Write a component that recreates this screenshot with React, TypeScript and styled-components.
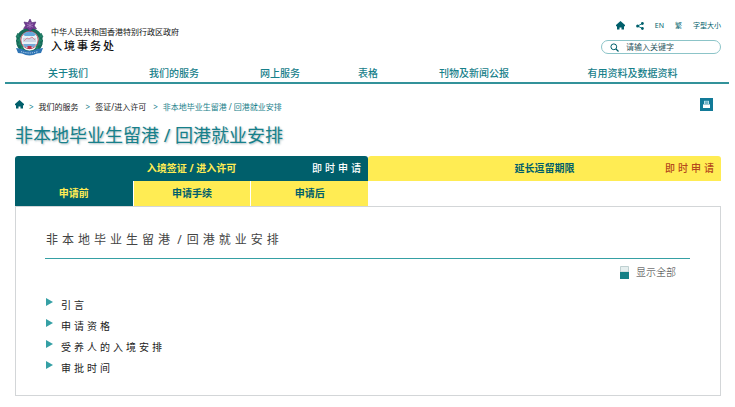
import React from "react";
import styled, { createGlobalStyle } from "styled-components";

const teal = "#17808a";
const deepTeal = "#005f6b";
const yellow = "#ffec53";

const GlobalStyle = createGlobalStyle`
  *, *::before, *::after { box-sizing: border-box; }
  body {
    margin: 0;
    background: #fff;
    color: #222;
    font-family: "Noto Sans", "Noto Sans CJK SC", sans-serif;
    font-size: 10px;
    line-height: 16px;
  }
  a { color: inherit; text-decoration: none; }
  button { font: inherit; color: inherit; border: 0; background: none; padding: 0; cursor: pointer; }
  h1, h2, ul, ol { margin: 0; padding: 0; font-weight: 400; list-style: none; }
  svg { display: block; flex: none; }
`;

const Header = styled.header`
  display: flex;
  justify-content: space-between;
  padding: 18px 14px 0 15px;
  height: 64px;
`;

const Brand = styled.a`
  display: flex;
  align-items: flex-start;
  gap: 7px;
`;

const BrandText = styled.span`
  display: flex;
  flex-direction: column;
  padding-top: 7px;
  color: #111;
`;

const Government = styled.span`
  font-size: 8px;
  line-height: 13px;
`;

const Department = styled.span`
  font-size: 11px;
  font-weight: 500;
  line-height: 15px;
  letter-spacing: 2px;
`;

const Tools = styled.div`
  display: flex;
  flex-direction: column;
  align-items: flex-end;
  gap: 7px;
`;

const ToolLinks = styled.div`
  display: flex;
  align-items: center;
  gap: 11px;
  height: 15px;
  color: ${deepTeal};
  font-size: 7px;
`;

const Search = styled.label`
  display: flex;
  align-items: center;
  gap: 7px;
  width: 120px;
  height: 14px;
  padding: 0 8px;
  border: 1px solid #8cc4c8;
  border-radius: 7px;
`;

const SearchInput = styled.input`
  flex: 1;
  min-width: 0;
  height: 12px;
  padding: 0;
  border: 0;
  outline: 0;
  background: none;
  font: inherit;
  font-size: 8px;
  line-height: 12px;
  &::placeholder { color: #2d5560; opacity: 1; }
`;

const Nav = styled.nav`
  display: flex;
  margin: 0 6px 0 5px;
  padding: 0 9px 0 10px;
  border-bottom: 2px solid #32929a;
  color: ${teal};
  font-weight: 500;
`;

const NavLink = styled.a<{ $share: number }>`
  flex: ${(p) => p.$share} 1 0;
  padding: 1px 0;
  text-align: center;
  white-space: nowrap;
`;

const Main = styled.main`
  padding: 14px 14px 11px 15px;
`;

const CrumbBar = styled.div`
  display: flex;
  align-items: flex-start;
  justify-content: space-between;
  padding-right: 8px;
`;

const Crumbs = styled.ol`
  display: flex;
  gap: 7px;
  font-size: 8px;
  line-height: 18px;
`;

const Crumb = styled.li<{ $current?: boolean }>`
  display: flex;
  gap: 5px;
  color: ${(p) => (p.$current ? teal : "#222")};
  &:first-child { padding-top: 2px; margin-right: -2px; }
  &:not(:first-child)::before { content: ">"; color: ${teal}; }
`;

const PrintButton = styled.button`
  display: grid;
  place-items: center;
  width: 13px;
  height: 13px;
  background: #127a98;
`;

const Title = styled.h1`
  margin: 6px 0 8px;
  color: ${teal};
  font-size: 18px;
  line-height: 26px;
  text-shadow: 1px 1px 2px #a8bcc0;
`;

const Tabs = styled.div`
  display: grid;
  grid-template-columns: 1fr 1fr;
  font-weight: 700;
  line-height: 25px;
`;

const Tab = styled.div<{ $active?: boolean }>`
  display: grid;
  grid-template-columns: 1fr auto 1fr;
  height: 25px;
  border-radius: 3px 3px 0 0;
  background: ${(p) => (p.$active ? deepTeal : yellow)};
  color: ${(p) => (p.$active ? yellow : deepTeal)};
`;

const TabLabel = styled.button`
  grid-column: 2;
`;

const Apply = styled.a<{ $active?: boolean }>`
  justify-self: end;
  padding-right: 4px;
  color: ${(p) => (p.$active ? "#fff" : "#b5481c")};
  font-weight: 500;
  letter-spacing: 3px;
`;

const SubTabs = styled.div`
  display: grid;
  grid-template-columns: repeat(3, 1fr);
`;

const SubTab = styled.button<{ $active?: boolean }>`
  height: 25px;
  background: ${(p) => (p.$active ? deepTeal : yellow)};
  color: ${(p) => (p.$active ? yellow : deepTeal)};
  font-weight: 700;
  & + & { border-left: 1px solid #fff; }
`;

const Panel = styled.section`
  padding: 21px 30px 16px 29px;
  border: 1px solid #d3d6d8;
`;

const PanelTitle = styled.h2`
  padding: 0 1px 7px;
  border-bottom: 1px solid #35a0a4;
  color: #444;
  font-size: 12px;
  line-height: 23px;
  letter-spacing: 4px;
`;

const Divider = styled.span`
  padding-right: 2px;
  letter-spacing: normal;
`;

const ShowAll = styled.button`
  display: flex;
  align-items: center;
  gap: 7px;
  margin: 5px 14px 15px auto;
  color: #333;
  font-weight: 300;
`;

const Topics = styled.ul`
  display: flex;
  flex-direction: column;
`;

const Topic = styled.button`
  display: flex;
  gap: 8px;
  height: 21px;
  padding-left: 1px;
  letter-spacing: 3px;
  line-height: 21px;
  svg { margin-top: 3px; }
`;

const HomeIcon = () => (
  <svg width="9" height="9" viewBox="0 0 9 9" fill={deepTeal} aria-hidden="true">
    <path d="M4.5 0 0 4v1.3h1v3.2h2.500V6.500h2v2H8V5.300h1V4z" />
  </svg>
);

const ShareIcon = () => (
  <svg width="8" height="8" viewBox="0 0 8 8" aria-hidden="true">
    <path d="M6.3 1.5 1.7 4l4.6 2.5" fill="none" stroke={teal} />
    <g fill={deepTeal}>
      <circle cx="6.4" cy="1.5" r="1.4" />
      <circle cx="1.6" cy="4" r="1.5" />
      <circle cx="6.4" cy="6.5" r="1.4" />
    </g>
  </svg>
);

const SearchIcon = () => (
  <svg width="9" height="9" viewBox="0 0 9 9" fill="none" stroke={deepTeal} aria-hidden="true">
    <circle cx="3.8" cy="3.8" r="2.9" />
    <path d="m6 6 2.5 2.5" strokeWidth="1.2" />
  </svg>
);

const PrintIcon = () => (
  <svg width="9" height="9" viewBox="0 0 9 9" aria-hidden="true">
    <path d="M2 .8h5V4H2z" fill="#b9e0ec" />
    <path d="M3 2h3M3 3.2h3" stroke="#127a98" strokeWidth=".6" />
    <path d="M1 4.4h7V8H1z" fill="#fff" />
  </svg>
);

const ExpandIcon = () => (
  <svg width="9" height="13" viewBox="0 0 9 13" aria-hidden="true">
    <path d="M.5.5h8V6h-8z" fill="#e5efef" stroke="#bfd0d1" />
    <path d="M0 6h9v7H0z" fill="#148086" />
  </svg>
);

const ArrowIcon = () => (
  <svg width="7" height="8" viewBox="0 0 7 8" aria-hidden="true">
    <path d="M0 0v8l7-4z" fill="#35a0a5" />
  </svg>
);

const Emblem = () => (
  <svg width="29" height="40" viewBox="0 0 29 40" aria-hidden="true">
    <circle cx="14.5" cy="23" r="11.5" fill="#f2f7f6" stroke="#176b59" strokeWidth="3.6" />
    <path
      d="M3 15 1 19l3 1-3 3 3 1-2 3 4 1-1 4 4-1M26 15l2 4-3 1 3 3-3 1 2 3-4 1 1 4-4-1"
      fill="#208368"
      stroke="#176b59"
      strokeWidth=".8"
    />
    <circle cx="14.5" cy="22" r="8.7" fill="#e8f1f6" stroke="#b62e45" strokeWidth=".8" />
    <path d="M8 16.500a8.700 8.700 0 0 1 13 0l-2 1.500h-9z" fill="#64aadb" />
    <path d="M8 20h13v4H8z" fill="#c9d3e3" />
    <path d="m9 23 3-3 2 1 3-2 3 3" fill="none" stroke="#d88b9a" />
    <path d="M8 26h13l-2 3h-9z" fill="#75a9d8" />
    <path d="m1 30 6 1q7.500 4 15 0l6-1-2 5-4 .5q-7.500 4-15 0L3 35z" fill="#2f75b5" />
    <path d="M6 33.500q8.500 3 17 0" fill="none" stroke="#c7ddf0" strokeDasharray="1.200 1" />
    <path d="M12.500 28h4v3h-4z" fill="#b92f48" />
    <path
      d="m15 1 1.800 3.700 4-.7-1.500 3.700 2.200 3-4 .1L15 13.500l-2.500-2.800-3.900-.2 2-3L9 4l4 .7z"
      fill="#713b91"
      stroke="#4d2471"
      strokeWidth=".6"
    />
    <path d="M15 4v6m-3-4 6 3m0-3-6 3" stroke="#b189c4" strokeWidth=".7" />
  </svg>
);

const navItems = [
  { label: "关于我们", share: 106 },
  { label: "我们的服务", share: 106 },
  { label: "网上服务", share: 106 },
  { label: "表格", share: 70 },
  { label: "刊物及新闻公报", share: 142 },
  { label: "有用资料及数据资料", share: 175 },
];

const topics = ["引言", "申请资格", "受养人的入境安排", "审批时间"];

export default function App() {
  return (
    <div lang="zh-Hans">
      <GlobalStyle />
      <Header>
        <Brand href="#">
          <Emblem />
          <BrandText>
            <Government>中华人民共和国香港特别行政区政府</Government>
            <Department>入境事务处</Department>
          </BrandText>
        </Brand>
        <Tools>
          <ToolLinks>
            <a href="#" aria-label="主页"><HomeIcon /></a>
            <a href="#" aria-label="分享"><ShareIcon /></a>
            <a href="#">EN</a>
            <a href="#">繁</a>
            <a href="#">字型大小</a>
          </ToolLinks>
          <Search>
            <SearchIcon />
            <SearchInput type="search" placeholder="请输入关键字" aria-label="搜索" />
          </Search>
        </Tools>
      </Header>
      <Nav>
        {navItems.map((item) => (
          <NavLink key={item.label} href="#" $share={item.share}>{item.label}</NavLink>
        ))}
      </Nav>
      <Main>
        <CrumbBar>
          <Crumbs>
            <Crumb><a href="#" aria-label="主页"><HomeIcon /></a></Crumb>
            <Crumb><a href="#">我们的服务</a></Crumb>
            <Crumb><a href="#">签证/进入许可</a></Crumb>
            <Crumb $current>非本地毕业生留港 / 回港就业安排</Crumb>
          </Crumbs>
          <PrintButton aria-label="打印"><PrintIcon /></PrintButton>
        </CrumbBar>
        <Title>非本地毕业生留港 / 回港就业安排</Title>
        <Tabs>
          <Tab $active>
            <TabLabel>入境签证 / 进入许可</TabLabel>
            <Apply href="#" $active>即时申请</Apply>
          </Tab>
          <Tab>
            <TabLabel>延长逗留期限</TabLabel>
            <Apply href="#">即时申请</Apply>
          </Tab>
          <SubTabs>
            <SubTab $active>申请前</SubTab>
            <SubTab>申请手续</SubTab>
            <SubTab>申请后</SubTab>
          </SubTabs>
        </Tabs>
        <Panel>
          <PanelTitle>非本地毕业生留港<Divider> / </Divider>回港就业安排</PanelTitle>
          <ShowAll><ExpandIcon />显示全部</ShowAll>
          <Topics>
            {topics.map((topic) => (
              <li key={topic}><Topic><ArrowIcon />{topic}</Topic></li>
            ))}
          </Topics>
        </Panel>
      </Main>
    </div>
  );
}
